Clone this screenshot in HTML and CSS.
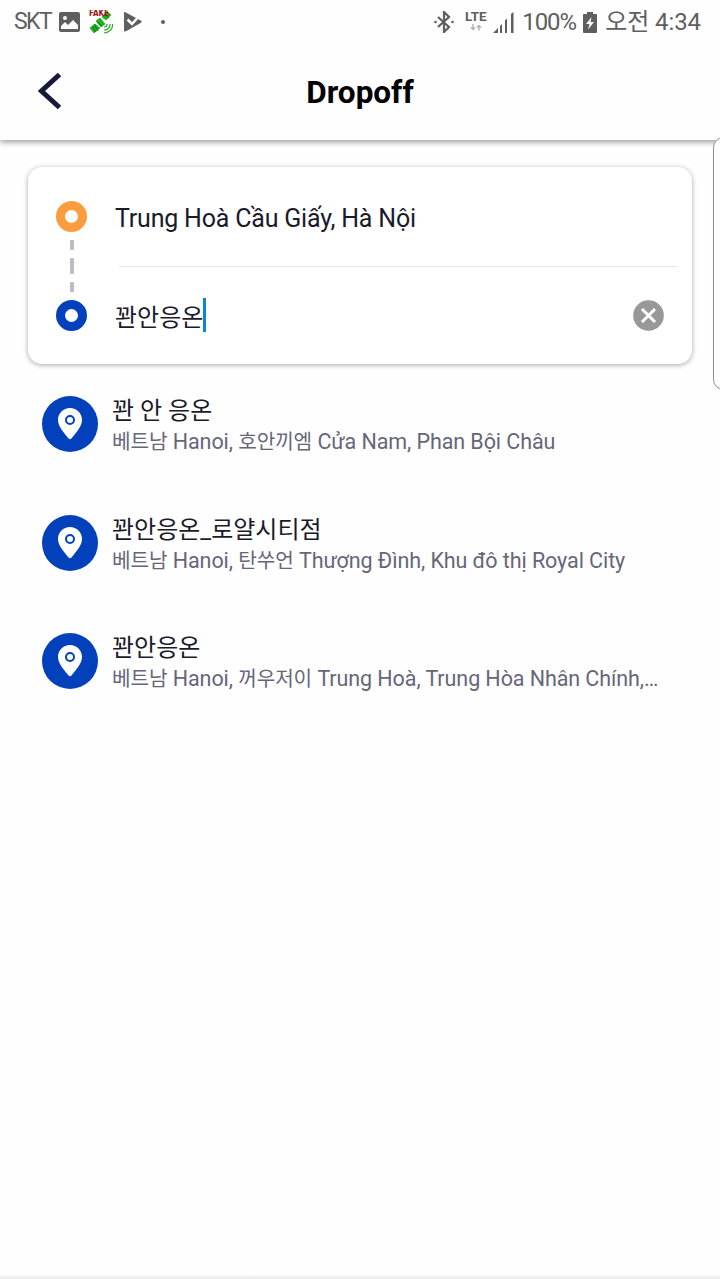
FILE: index.html
```
<!DOCTYPE html>
<html lang="ko">
<head>
    <meta charset="UTF-8">
    <title>Dropoff</title>
    <link rel="stylesheet" href="styles.css">
</head>
<body>
    <div class="status-bar">
        <div class="status-left">
            <span class="carrier">SKT</span>
            <svg class="icon-image" width="21" height="20" viewBox="0 0 21 20">
                <rect width="21" height="20" rx="2" fill="#5f5f5f"/>
                <path d="M2 17V14L6 10L9 13L14 8L19 13V17Z" fill="#fff"/>
                <circle cx="6" cy="6" r="2" fill="#fff"/>
            </svg>
            <svg class="icon-fake" width="24" height="24" viewBox="0 0 24 24">
                <g fill="#16b716" stroke="#0a7a0a" stroke-width=".5">
                    <path d="M1 18L6 14L11 18L5 23Z"/>
                    <path d="M7 11L11 8L16 14L12 17Z"/>
                    <path d="M13 7L18 1L22 5L17 10Z"/>
                </g>
                <path d="M5 14L9 21M3 16L7 22M8 12L13 16M16 5L20 8" fill="none" stroke="#0b6d0b" stroke-width=".8"/>
                <path d="M15 17Q18 17 18 14M15 20Q21 20 21 14M15 23Q24 22 23.500 14" fill="none" stroke="#20ad20" stroke-width="1.200"/>
                <text class="fake-label" x="0" y="6" textLength="20" lengthAdjust="spacingAndGlyphs">FAKE</text>
            </svg>
            <svg class="icon-check" width="18" height="20" viewBox="0 0 18 20">
                <path d="M1 0L17.500 9Q18 10 17 10.800L1.500 19.500Q0 20 0 18V1Q0 0 1 0Z" fill="#5f5f5f"/>
                <path d="M3.500 7.500L8 12L18 1" fill="none" stroke="#fff" stroke-width="2.500"/>
            </svg>
            <span class="dot"></span>
        </div>
        <div class="status-right">
            <svg class="icon-bluetooth" width="20" height="22" viewBox="0 0 20 22">
                <path d="M4 6L15 16L10 21V1L15 6L4 16" fill="none" stroke="#5f5f5f" stroke-width="2.200"/>
                <circle cx="1.500" cy="11" r="1.300" fill="#5f5f5f"/>
                <circle cx="18.500" cy="11" r="1.300" fill="#5f5f5f"/>
            </svg>
            <div class="lte">
                <span>LTE</span>
                <svg width="12" height="7" viewBox="0 0 12 7">
                    <path d="M3 0V5M1 3.500L3 5.500L5 3.500M9 6.500V2M7 3.500L9 1.500L11 3.500" fill="none" stroke="#b5b5b5" stroke-width="1.500"/>
                </svg>
            </div>
            <svg class="icon-signal" width="22" height="21" viewBox="0 0 22 21">
                <path d="M0 21L5 16V21ZM7 14L9 12V21H7ZM12 8.500L14 6.500V21H12ZM18 2L20.500 0V21H18Z" fill="#5f5f5f"/>
            </svg>
            <span class="percent">100%</span>
            <svg class="icon-battery" width="14" height="21" viewBox="0 0 14 21">
                <path d="M4 0H10V2H13Q14 2 14 3V20Q14 21 13 21H1Q0 21 0 20V3Q0 2 1 2H4Z" fill="#5f5f5f"/>
                <path d="M8.500 5L3 12H6.500L5 17.500L11 10H7.500Z" fill="#fff"/>
            </svg>
            <span class="time">오전 4:34</span>
        </div>
    </div>

    <header class="header">
        <a href="#" class="back">
            <svg width="24" height="38" viewBox="0 0 24 38">
                <path d="M21.500 2.500L3.500 19L21.500 35.500" fill="none" stroke="#17193b" stroke-width="5"/>
            </svg>
        </a>
        <h1>Dropoff</h1>
    </header>

    <main>
        <section class="route-card">
            <div class="route-line">
                <span class="stop pickup"></span>
                <span class="dash"></span>
                <span class="dash long"></span>
                <span class="dash"></span>
                <span class="stop dropoff"></span>
            </div>
            <div class="fields">
                <div class="field"><span class="address">Trung Hoà Cầu Giấy, Hà Nội</span></div>
                <div class="field field-active">
                    <span class="query">꽌안응온</span>
                    <span class="caret"></span>
                    <button class="clear" aria-label="Clear">
                        <svg width="31" height="31" viewBox="0 0 31 31">
                            <circle cx="15.500" cy="15.500" r="15.300" fill="#989898"/>
                            <path d="M9 9L22 22M22 9L9 22" stroke="#fff" stroke-width="3"/>
                        </svg>
                    </button>
                </div>
            </div>
        </section>

        <ul class="results">
            <li class="result">
                <span class="pin">
                    <svg width="24" height="32" viewBox="0 0 24 32">
                        <path d="M12 0C5.300 0 0 5.200 0 11.800C0 18.500 5 23.500 10.500 30.500Q12 32 13.500 30.500C19 23.500 24 18.500 24 11.800C24 5.200 18.700 0 12 0Z" fill="#fff"/>
                        <circle cx="12" cy="12" r="4" fill="none" stroke="#0340bb" stroke-width="2"/>
                    </svg>
                </span>
                <div class="result-text">
                    <h2>꽌 안 응온</h2>
                    <p><span class="ko">베트남</span> Hanoi, <span class="ko">호안끼엠</span> Cửa Nam, Phan Bội Châu</p>
                </div>
            </li>
            <li class="result">
                <span class="pin">
                    <svg width="24" height="32" viewBox="0 0 24 32">
                        <path d="M12 0C5.300 0 0 5.200 0 11.800C0 18.500 5 23.500 10.500 30.500Q12 32 13.500 30.500C19 23.500 24 18.500 24 11.800C24 5.200 18.700 0 12 0Z" fill="#fff"/>
                        <circle cx="12" cy="12" r="4" fill="none" stroke="#0340bb" stroke-width="2"/>
                    </svg>
                </span>
                <div class="result-text">
                    <h2>꽌안응온_로얄시티점</h2>
                    <p><span class="ko">베트남</span> Hanoi, <span class="ko">탄쑤언</span> Thượng Đình, Khu đô thị Royal City</p>
                </div>
            </li>
            <li class="result">
                <span class="pin">
                    <svg width="24" height="32" viewBox="0 0 24 32">
                        <path d="M12 0C5.300 0 0 5.200 0 11.800C0 18.500 5 23.500 10.500 30.500Q12 32 13.500 30.500C19 23.500 24 18.500 24 11.800C24 5.200 18.700 0 12 0Z" fill="#fff"/>
                        <circle cx="12" cy="12" r="4" fill="none" stroke="#0340bb" stroke-width="2"/>
                    </svg>
                </span>
                <div class="result-text">
                    <h2>꽌안응온</h2>
                    <p><span class="ko">베트남</span> Hanoi, <span class="ko">꺼우저이</span> Trung Hoà, Trung Hòa Nhân Chính,…</p>
                </div>
            </li>
        </ul>
    </main>

    <div class="edge-handle"></div>
    <div class="bottom-shade"></div>
</body>
</html>
```

FILE: styles.css
```
:root {
    --text-color: #1a1a2b;
    --muted-color: #66667a;
    --status-color: #5f5f5f;
    --blue: #0340bb;
    --orange: #f99d3f;
}

* {
    margin: 0;
    padding: 0;
    box-sizing: border-box;
}

body {
    position: relative;
    height: 1279px;
    overflow: hidden;
    font-family: Roboto, "Noto Sans CJK KR", sans-serif;
    background-color: #fefefe;
    color: var(--text-color);
}

svg {
    display: block;
    flex: none;
}

/* Status bar */
.status-bar {
    display: flex;
    justify-content: space-between;
    height: 44px;
    padding: 0 19px 0 14px;
    color: var(--status-color);
    font-size: 24px;
    line-height: 44px;
    white-space: nowrap;
}

.status-left,
.status-right {
    display: flex;
    align-items: center;
}

.carrier {
    width: 45px;
    font-size: 23px;
    letter-spacing: -1.6px;
}

.icon-fake {
    margin-left: 9px;
}

.fake-label {
    font: bold 8px "DejaVu Sans", sans-serif;
    fill: #a31515;
}

.icon-check {
    margin-left: 11px;
}

.dot {
    width: 4px;
    height: 4px;
    margin-left: 19px;
    border-radius: 50%;
    background-color: var(--status-color);
}

.lte {
    display: flex;
    flex-direction: column;
    align-items: center;
    width: 23px;
    margin-left: 10px;
    font-size: 13.5px;
    font-weight: bold;
    line-height: 13px;
}

.lte svg {
    margin: 1px 0 3px;
}

.icon-signal {
    margin-left: 6px;
}

.percent {
    width: 53px;
    margin-left: 7px;
    letter-spacing: -1.1px;
}

.icon-battery {
    margin-left: 8px;
}

.time {
    margin-left: 8px;
    letter-spacing: -0.1px;
}

/* Header */
.header {
    position: relative;
    display: flex;
    align-items: center;
    justify-content: center;
    height: 96px;
    background-color: #fefefe;
    box-shadow: 0 2px 6px rgba(0,0,0,0.4);
    clip-path: inset(0 0 -12px);
}

.header h1 {
    font-size: 31.5px;
    font-weight: bold;
    color: #000;
}

.back {
    position: absolute;
    left: 38px;
    top: 28px;
}

/* Pickup and dropoff fields */
.route-card {
    display: flex;
    height: 197px;
    margin: 27px 28px 0;
    padding: 0 14px 0 28px;
    border-radius: 14px;
    background-color: #fff;
    box-shadow: 0 1px 5px rgba(0,0,0,0.35);
}

.route-line {
    display: flex;
    flex-direction: column;
    align-items: center;
    width: 31px;
    padding-top: 34px;
}

.stop {
    width: 31px;
    height: 31px;
    border: 9.5px solid var(--orange);
    border-radius: 50%;
    background-color: #fff;
}

.pickup {
    margin-bottom: 8px;
}

.dropoff {
    border-color: var(--blue);
}

.dash {
    width: 4px;
    height: 10px;
    margin-bottom: 8px;
    border-radius: 1px;
    background-color: #bcbcc4;
}

.dash.long {
    height: 16px;
}

.fields {
    flex: 1;
    margin-left: 28px;
}

.field {
    display: flex;
    align-items: center;
    height: 98px;
    padding-top: 4px;
    font-size: 24px;
    white-space: nowrap;
}

.address {
    font-size: 25px;
    letter-spacing: -0.2px;
}

.field-active {
    position: relative;
    padding: 2px 14px 0 0;
}

.field-active::before {
    content: "";
    position: absolute;
    top: 1px;
    left: 4px;
    right: 0;
    height: 1px;
    background-color: #e8e8ea;
}

.caret {
    width: 3px;
    height: 34px;
    background-color: #0b84dc;
}

.clear {
    margin-left: auto;
    border: none;
    background: none;
}

/* Search results */
.results {
    display: flex;
    flex-direction: column;
    gap: 62.5px;
    margin: 32px 42px 0;
    list-style: none;
}

.result {
    display: flex;
    height: 56px;
    gap: 14px;
}

.pin {
    display: flex;
    align-items: center;
    justify-content: center;
    flex: none;
    width: 56px;
    height: 56px;
    border-radius: 50%;
    background-color: var(--blue);
}

.result-text {
    white-space: nowrap;
}

.result h2 {
    height: 30px;
    font-size: 24px;
    font-weight: normal;
    line-height: 31px;
}

.result p {
    font-size: 21.5px;
    line-height: 32px;
    letter-spacing: -0.08px;
    color: var(--muted-color);
}

.result .ko {
    font-size: 20.2px;
}

/* System edge panel handle */
.edge-handle {
    position: absolute;
    top: 137px;
    right: -14px;
    width: 21px;
    height: 253px;
    border: 1px solid #8c8c8c;
    border-radius: 12px;
    background-color: #fefefe;
}

.bottom-shade {
    position: absolute;
    left: 0;
    right: 0;
    bottom: 0;
    height: 5px;
    background: linear-gradient(#fefefe, #e8e8e8);
}
```
